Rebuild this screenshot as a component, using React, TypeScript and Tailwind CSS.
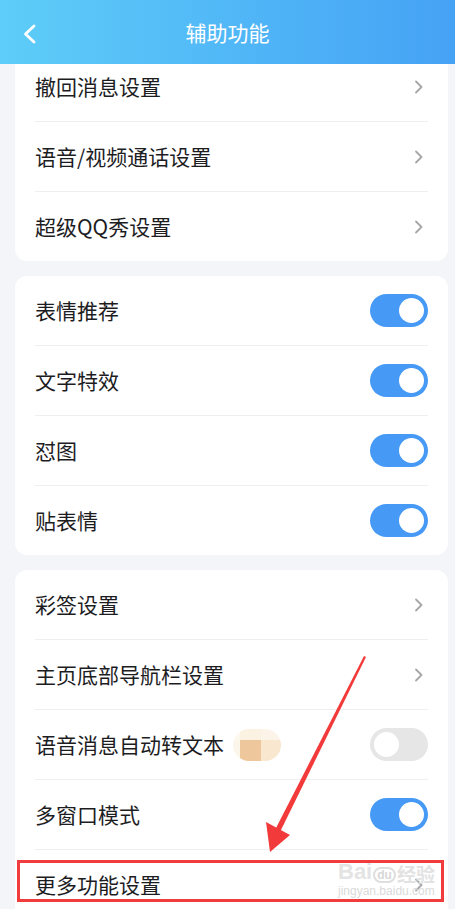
import React from "react";

type Row = { label: string; kind: "arrow" | "on" | "off"; extra?: boolean };

const Chevron = () => (
  <svg width="10" height="14" viewBox="0 0 10 14" fill="none">
    <path d="M2 1.5 L7.5 7 L2 12.5" stroke="#a6a6a6" strokeWidth="1.8" strokeLinecap="round" strokeLinejoin="round" />
  </svg>
);

const Toggle = ({ on }: { on: boolean }) =>
  on ? (
    <div className="flex h-[33px] w-[58px] items-center justify-end rounded-full bg-[#4699f4] pr-[4px]">
      <div className="h-[25px] w-[25px] rounded-full bg-white" />
    </div>
  ) : (
    <div className="flex h-[33px] w-[58px] items-center justify-start rounded-full bg-[#e6e6e6] pl-[4px]">
      <div className="h-[25px] w-[25px] rounded-full bg-white" />
    </div>
  );

const BlurEmoji = () => (
  <div className="ml-[9px] grid h-[32px] w-[48px] grid-cols-[7px_21px_20px] grid-rows-[11px_21px] overflow-hidden rounded-full">
    <div className="bg-[#fdf8ee]" />
    <div className="bg-[#fbf2e2]" />
    <div className="bg-[#fcf4e8]" />
    <div className="bg-[#fcf6ea]" />
    <div className="bg-[#efc79c]" />
    <div className="bg-[#f9e7d0]" />
  </div>
);

const Card = ({ rows }: { rows: Row[] }) => (
  <div className="ml-[15px] mr-[7px] overflow-hidden rounded-[12px] bg-white px-[20px]">
    {rows.map((r, i) => (
      <div key={r.label} className={i > 0 ? "border-t border-[#efefef]" : ""}>
        <div className="flex h-[69px] items-center justify-between">
          <div className="flex items-center">
            <span className="text-[21px] leading-none text-[#1d1d1f]">{r.label}</span>
            {r.extra && <BlurEmoji />}
          </div>
          {r.kind === "arrow" ? (
            <div className="mr-[4px] flex items-center">
              <Chevron />
            </div>
          ) : (
            <Toggle on={r.kind === "on"} />
          )}
        </div>
      </div>
    ))}
  </div>
);

export default function App() {
  return (
    <div
      className="relative h-[909px] w-[455px] overflow-hidden bg-[#f3f5f8]"
      style={{ fontFamily: '"Noto Sans CJK SC", "Noto Sans", sans-serif' }}
    >
      <header className="relative z-10 flex h-[64px] items-center justify-center bg-gradient-to-r from-[#5ecdf8] to-[#46a2f5]">
        <div className="absolute left-[22px] top-[24px]">
          <svg width="16" height="20" viewBox="0 0 16 20" fill="none">
            <path d="M12 2 L3.5 10 L12 18" stroke="white" strokeWidth="2.8" strokeLinecap="round" strokeLinejoin="round" />
          </svg>
        </div>
        <span className="text-[21px] leading-none text-white">辅助功能</span>
      </header>

      <main className="mt-[-12px] flex flex-col gap-[15px]">
        <Card
          rows={[
            { label: "撤回消息设置", kind: "arrow" },
            { label: "语音/视频通话设置", kind: "arrow" },
            { label: "超级QQ秀设置", kind: "arrow" },
          ]}
        />
        <Card
          rows={[
            { label: "表情推荐", kind: "on" },
            { label: "文字特效", kind: "on" },
            { label: "怼图", kind: "on" },
            { label: "贴表情", kind: "on" },
          ]}
        />
        <Card
          rows={[
            { label: "彩签设置", kind: "arrow" },
            { label: "主页底部导航栏设置", kind: "arrow" },
            { label: "语音消息自动转文本", kind: "off", extra: true },
            { label: "多窗口模式", kind: "on" },
            { label: "更多功能设置", kind: "arrow" },
          ]}
        />
      </main>

      {/* annotation arrow */}
      <svg className="pointer-events-none absolute left-0 top-0" width="455" height="909" viewBox="0 0 455 909">
        <polygon points="364,656 366,657 280,832 275,830" fill="#f23a3a" />
        <polygon points="266,822 290,835 270,852" fill="#f23a3a" />
      </svg>

      {/* annotation box */}
      <div className="pointer-events-none absolute left-[17px] top-[860px] h-[42px] w-[427px] border-[3px] border-[#f03c3c]" />

      {/* watermark */}
      <div className="pointer-events-none absolute left-[338px] top-[861px] flex flex-col items-start">
        <div className="flex items-end leading-none">
          <span className="text-[22px] font-bold text-[#e4e4e4]" style={{ fontFamily: '"Liberation Sans", sans-serif' }}>
            Bai
          </span>
          <span className="mx-[1px] rounded-full border-2 border-[#dedede] px-[2px] text-[12px] font-bold text-[#d8d8d8]" style={{ fontFamily: '"Liberation Sans", sans-serif' }}>
            du
          </span>
          <span className="text-[19px] font-bold text-[#e2e2e2]">经验</span>
        </div>
        <span className="mt-[2px] text-[12px] leading-none text-[#dadada]" style={{ fontFamily: '"Liberation Sans", sans-serif' }}>
          jingyan.baidu.com
        </span>
      </div>
    </div>
  );
}
